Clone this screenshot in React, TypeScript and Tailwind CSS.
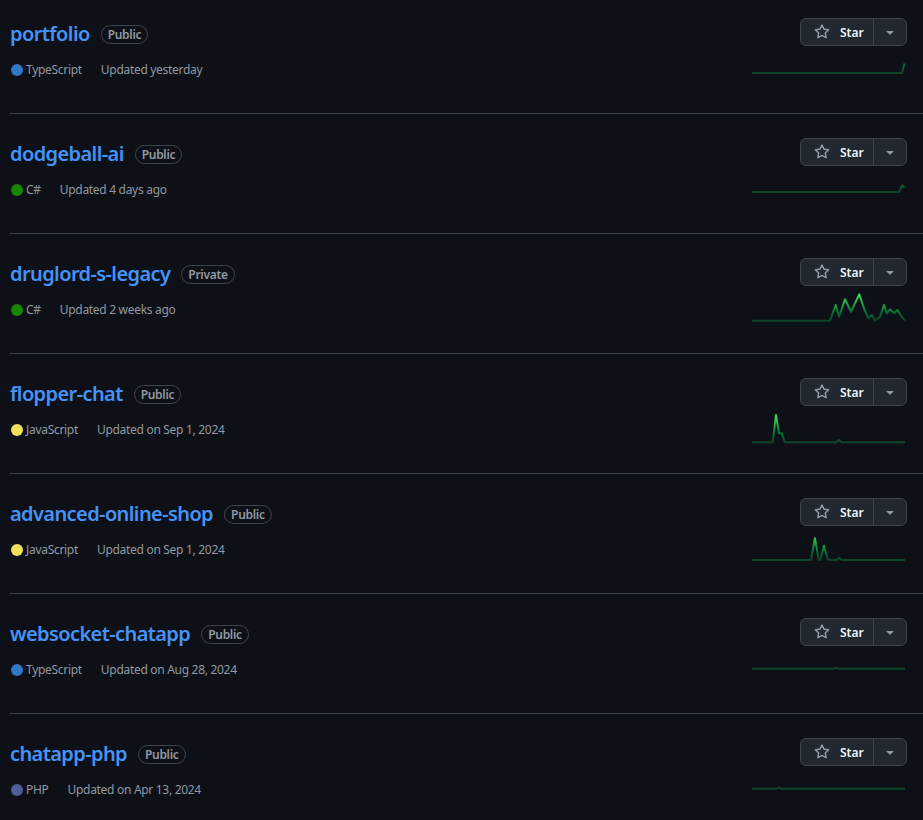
import React from "react";

type Repo = {
  name: string;
  vis: string;
  lang: string;
  dot: string;
  updated: string;
  base: number;
  points: [number, number][];
};

const repos: Repo[] = [
  {
    name: "portfolio",
    vis: "Public",
    lang: "TypeScript",
    dot: "bg-[#3178c6]",
    updated: "Updated yesterday",
    base: 25,
    points: [[0, 25], [150, 25], [152.5, 15.5]],
  },
  {
    name: "dodgeball-ai",
    vis: "Public",
    lang: "C#",
    dot: "bg-[#178600]",
    updated: "Updated 4 days ago",
    base: 24,
    points: [[0, 24], [147, 24], [150, 17.5], [152.5, 19.5]],
  },
  {
    name: "druglord-s-legacy",
    vis: "Private",
    lang: "C#",
    dot: "bg-[#178600]",
    updated: "Updated 2 weeks ago",
    base: 32.7,
    points: [
      [0, 32.7], [78, 32.7], [83.7, 17], [87, 28.7], [93, 11.3], [99, 23.7],
      [107.3, 6.3], [112, 20.3], [116.3, 30.3], [119.7, 27], [123, 32.7],
      [128, 28.7], [132, 17], [134.7, 25.3], [138, 21.3], [142, 25.3],
      [145.3, 22], [149.7, 28.7], [153, 32.7],
    ],
  },
  {
    name: "flopper-chat",
    vis: "Public",
    lang: "JavaScript",
    dot: "bg-[#f1e05a]",
    updated: "Updated on Sep 1, 2024",
    base: 34.3,
    points: [
      [0, 34.3], [20.7, 34.3], [24, 7], [27, 25.3], [29.7, 25.3], [33, 34.3],
      [84, 34.3], [86.7, 31.7], [89.3, 34.3], [153, 34.3],
    ],
  },
  {
    name: "advanced-online-shop",
    vis: "Public",
    lang: "JavaScript",
    dot: "bg-[#f1e05a]",
    updated: "Updated on Sep 1, 2024",
    base: 32,
    points: [
      [0, 32], [59, 32], [63, 10.3], [66.7, 32], [68.3, 32], [72, 17.7],
      [75.3, 30.3], [77.3, 32], [84.3, 32], [87, 29.7], [89.7, 32], [153, 32],
    ],
  },
  {
    name: "websocket-chatapp",
    vis: "Public",
    lang: "TypeScript",
    dot: "bg-[#3178c6]",
    updated: "Updated on Aug 28, 2024",
    base: 20.7,
    points: [[0, 20.7], [82, 20.7], [84, 19.5], [86, 20.7], [153, 20.7]],
  },
  {
    name: "chatapp-php",
    vis: "Public",
    lang: "PHP",
    dot: "bg-[#4f5d95]",
    updated: "Updated on Apr 13, 2024",
    base: 20.7,
    points: [[0, 20.7], [25, 20.7], [27, 19.5], [29, 20.7], [153, 20.7]],
  },
];

function StarIcon() {
  return (
    <svg width="16" height="16" viewBox="0 0 16 16" fill="#9198a1">
      <path d="M8 .25a.75.75 0 0 1 .673.418l1.882 3.815 4.21.612a.75.75 0 0 1 .416 1.279l-3.046 2.97.719 4.192a.751.751 0 0 1-1.088.791L8 12.347l-3.766 1.98a.75.75 0 0 1-1.088-.79l.72-4.194L.818 6.374a.75.75 0 0 1 .416-1.28l4.21-.611L7.327.668A.75.75 0 0 1 8 .25Zm0 2.445L6.615 5.5a.75.75 0 0 1-.564.41l-3.097.45 2.24 2.184a.75.75 0 0 1 .216.664l-.528 3.084 2.769-1.456a.75.75 0 0 1 .698 0l2.77 1.456-.53-3.084a.75.75 0 0 1 .216-.664l2.24-2.183-3.096-.45a.75.75 0 0 1-.564-.41L8 2.694Z" />
    </svg>
  );
}

function TriangleDown() {
  return (
    <svg width="16" height="16" viewBox="0 0 16 16" fill="#9198a1">
      <path d="m4.427 7.427 3.396 3.396a.25.25 0 0 0 .354 0l3.396-3.396A.25.25 0 0 0 11.396 7H4.604a.25.25 0 0 0-.177.427Z" />
    </svg>
  );
}

function Sparkline({ repo, id }: { repo: Repo; id: string }) {
  const d = repo.points.map((p, i) => `${i === 0 ? "M" : "L"}${p[0]} ${p[1]}`).join(" ");
  return (
    <svg width="155" height="40" className="mt-[2px] block">
      <defs>
        <linearGradient id={id} gradientUnits="userSpaceOnUse" x1="0" y1={repo.base + 2} x2="0" y2={repo.base - 28}>
          <stop offset="10%" stopColor="#0e4429" />
          <stop offset="33%" stopColor="#006d32" />
          <stop offset="66%" stopColor="#26a641" />
          <stop offset="90%" stopColor="#39d353" />
        </linearGradient>
      </defs>
      <path d={d} fill="none" stroke={`url(#${id})`} strokeWidth="2" strokeLinejoin="round" />
    </svg>
  );
}

function Row({ repo, idx }: { repo: Repo; idx: number }) {
  return (
    <div className="flex justify-between border-b border-[#3d444d] pt-6 pb-[25px] pr-4">
      <div className="flex flex-col">
        <div className="mt-px flex h-[30px] items-center">
          <a className="text-[20px] font-semibold leading-[30px] tracking-[-0.6px] text-[#4493f8]">{repo.name}</a>
          <span className="ml-[11px] rounded-full border border-[#3d444d] px-[6px] text-[12px] font-semibold leading-[17px] tracking-[-0.3px] text-[#9198a1]">
            {repo.vis}
          </span>
        </div>
        <div className="mt-3 flex items-center text-[12px] leading-[18px] tracking-[-0.3px] text-[#9198a1]">
          <span className={`ml-px h-3 w-3 rounded-full ${repo.dot}`} />
          <span className="ml-[3px]">{repo.lang}</span>
          <span className="ml-[19px]">{repo.updated}</span>
        </div>
      </div>
      <div className="flex w-[155px] flex-col items-end">
        <div className="flex h-[28px] rounded-md border border-[#3d444d] bg-[#212830] text-[12px] font-semibold text-[#f0f6fc]">
          <div className="flex w-[73px] items-center border-r border-[#3d444d] pl-[13px]">
            <StarIcon />
            <span className="ml-[10px] pt-px">Star</span>
          </div>
          <div className="flex w-[32px] items-center justify-center">
            <TriangleDown />
          </div>
        </div>
        <Sparkline repo={repo} id={`spark-${idx}`} />
      </div>
    </div>
  );
}

export default function App() {
  return (
    <div
      className="min-h-[820px] w-full overflow-hidden bg-[#0d1117] pl-[10px]"
      style={{ fontFamily: '"Segoe UI", "Noto Sans", "Liberation Sans", sans-serif' }}
    >
      <div className="-mt-1.5">
        {repos.map((r, i) => (
          <Row key={r.name} repo={r} idx={i} />
        ))}
      </div>
    </div>
  );
}
